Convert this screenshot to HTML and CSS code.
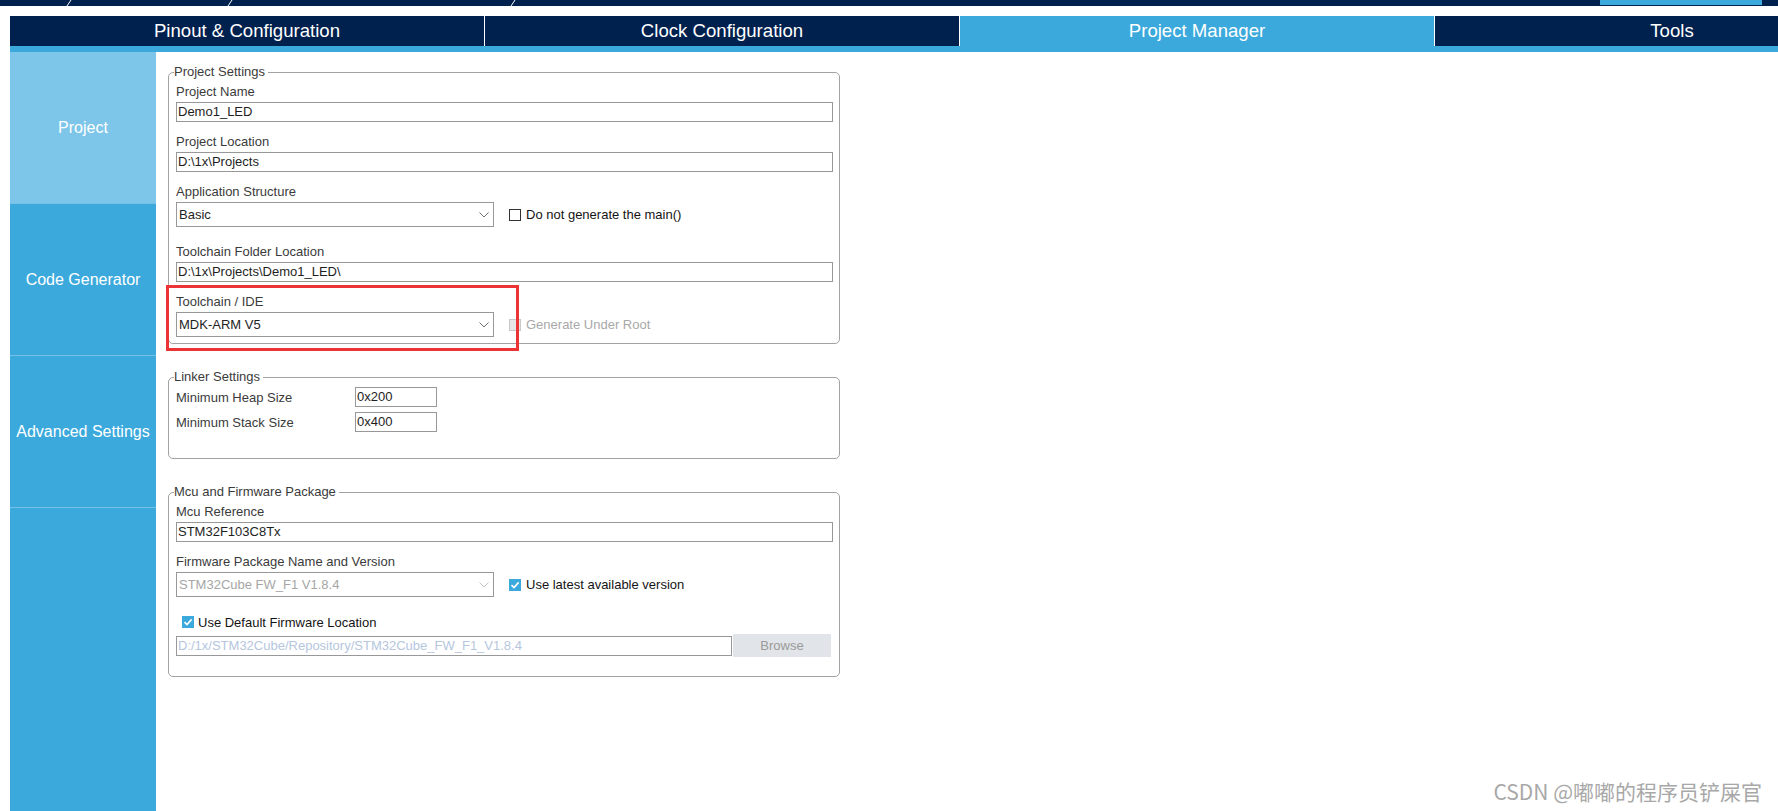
FILE: index.html
```html
<!DOCTYPE html>
<html>
<head>
    <meta charset="UTF-8">
    <title>Project Manager</title>
    <link rel="stylesheet" href="styles.css">
</head>
<body>
<div id="topStrip">
    <svg class="tick tick-1" width="6" height="6" viewBox="0 0 6 6"><path d="M1 6 L5 0" stroke="#fff" stroke-width="1"/></svg>
    <svg class="tick tick-2" width="6" height="6" viewBox="0 0 6 6"><path d="M1 6 L5 0" stroke="#fff" stroke-width="1"/></svg>
    <svg class="tick tick-3" width="6" height="6" viewBox="0 0 6 6"><path d="M1 6 L5 0" stroke="#fff" stroke-width="1"/></svg>
    <span class="top-active"></span>
</div>

<div id="tabBar">
    <div class="tab">Pinout &amp; Configuration</div>
    <div class="tab">Clock Configuration</div>
    <div class="tab active">Project Manager</div>
    <div class="tab">Tools</div>
</div>
<div id="tabLine"></div>

<div id="workArea">
    <div id="sideMenu">
        <div class="side-item selected">Project</div>
        <div class="side-item">Code Generator</div>
        <div class="side-item">Advanced Settings</div>
    </div>

    <div id="mainPanel">
        <fieldset class="group" id="projectSettings">
            <legend>Project Settings</legend>
            <label class="field-label first">Project Name</label>
            <div class="text-box">Demo1_LED</div>
            <label class="field-label">Project Location</label>
            <div class="text-box">D:\1x\Projects</div>
            <label class="field-label">Application Structure</label>
            <div class="combo-row">
                <div class="combo">
                    <span>Basic</span>
                    <svg class="chevron" width="10" height="6" viewBox="0 0 10 6"><path d="M0.5 0.5 L5 5 L9.5 0.5" fill="none" stroke="#6e6e6e" stroke-width="1"/></svg>
                </div>
                <span class="check-box"></span>
                <span class="check-text">Do not generate the main()</span>
            </div>
            <label class="field-label spaced">Toolchain Folder Location</label>
            <div class="text-box">D:\1x\Projects\Demo1_LED\</div>
            <div class="ide-group">
                <label class="field-label">Toolchain / IDE</label>
                <div class="combo-row">
                    <div class="combo">
                        <span>MDK-ARM V5</span>
                        <svg class="chevron" width="10" height="6" viewBox="0 0 10 6"><path d="M0.5 0.5 L5 5 L9.5 0.5" fill="none" stroke="#6e6e6e" stroke-width="1"/></svg>
                    </div>
                    <span class="check-box disabled"></span>
                    <span class="check-text disabled">Generate Under Root</span>
                </div>
                <span class="red-mark"></span>
            </div>
        </fieldset>

        <fieldset class="group" id="linkerSettings">
            <legend>Linker Settings</legend>
            <div class="linker-row first">
                <label class="linker-label">Minimum Heap Size</label>
                <div class="small-box">0x200</div>
            </div>
            <div class="linker-row">
                <label class="linker-label">Minimum Stack Size</label>
                <div class="small-box">0x400</div>
            </div>
        </fieldset>

        <fieldset class="group" id="mcuPackage">
            <legend>Mcu and Firmware Package</legend>
            <label class="field-label first">Mcu Reference</label>
            <div class="text-box">STM32F103C8Tx</div>
            <label class="field-label">Firmware Package Name and Version</label>
            <div class="combo-row">
                <div class="combo disabled">
                    <span>STM32Cube FW_F1 V1.8.4</span>
                    <svg class="chevron" width="10" height="6" viewBox="0 0 10 6"><path d="M0.5 0.5 L5 5 L9.5 0.5" fill="none" stroke="#c4c4c4" stroke-width="1"/></svg>
                </div>
                <span class="check-box checked"><svg width="12" height="12" viewBox="0 0 12 12"><path d="M2.5 6.2 L5 8.6 L9.6 3.4" fill="none" stroke="#fff" stroke-width="1.6"/></svg></span>
                <span class="check-text">Use latest available version</span>
            </div>
            <div class="default-row">
                <span class="check-box checked"><svg width="12" height="12" viewBox="0 0 12 12"><path d="M2.5 6.2 L5 8.6 L9.6 3.4" fill="none" stroke="#fff" stroke-width="1.6"/></svg></span>
                <span class="check-text">Use Default Firmware Location</span>
            </div>
            <div class="path-row">
                <div class="path-box">D:/1x/STM32Cube/Repository/STM32Cube_FW_F1_V1.8.4</div>
                <button class="browse-btn">Browse</button>
            </div>
        </fieldset>
    </div>
</div>

<div id="watermark">CSDN @嘟嘟的程序员铲屎官</div>
</body>
</html>
```

FILE: styles.css
```css
body {
    margin: 0;
    font-family: "Liberation Sans", Arial, sans-serif;
    font-size: 13px;
    background-color: #fff;
    width: 1778px;
    height: 811px;
    overflow: hidden;
}
#topStrip {
    display: flex;
    height: 6px;
    background-color: #00204e;
}
.tick {
    flex: none;
}
.tick-1 {
    margin-left: 66px;
}
.tick-2 {
    margin-left: 155px;
}
.tick-3 {
    margin-left: 277px;
}
.top-active {
    flex: none;
    width: 162px;
    height: 5px;
    margin-left: 1084px;
    background-color: #3ba9dc;
}
#tabBar {
    display: flex;
    margin: 10px 0 0 10px;
    height: 30px;
    overflow: hidden;
}
.tab {
    flex: 0 0 474px;
    border-right: 1px solid #fff;
    background-color: #00204e;
    color: #fff;
    font-size: 18.6px;
    line-height: 30px;
    text-align: center;
}
.tab.active {
    background-color: #3ba9dc;
}
#tabLine {
    margin-left: 10px;
    height: 6px;
    background-color: #3ba9dc;
}
#workArea {
    display: flex;
    margin-left: 10px;
    height: 759px;
}
#sideMenu {
    flex: 0 0 146px;
    background-color: #3ba9dc;
}
.side-item {
    height: 151px;
    border-bottom: 1px solid #76c2e6;
    display: flex;
    align-items: center;
    justify-content: center;
    color: #fff;
    font-size: 16px;
}
.side-item.selected {
    background-color: #7dc6e9;
}
#mainPanel {
    padding: 12px 0 0 12px;
}
.group {
    box-sizing: border-box;
    width: 672px;
    margin: 0 0 25px 0;
    padding: 0 6px 6px 7px;
    border: 1px solid #a2a2a2;
    border-radius: 5px;
    min-width: 0;
}
.group legend {
    padding: 0 3px 0 0;
    margin-left: -2px;
    line-height: 16px;
    color: #3b3b3b;
}
.field-label {
    display: block;
    margin-top: 12px;
    line-height: 16px;
    color: #3b3b3b;
}
.field-label.first {
    margin-top: 4px;
}
.field-label.spaced {
    margin-top: 17px;
}
.text-box {
    box-sizing: border-box;
    height: 20px;
    margin-top: 2px;
    padding-left: 1px;
    border: 1px solid #989898;
    line-height: 18px;
    color: #1e1e1e;
}
.combo-row {
    display: flex;
    align-items: center;
    margin-top: 2px;
}
.combo {
    box-sizing: border-box;
    width: 318px;
    height: 25px;
    padding: 0 4px 0 2px;
    border: 1px solid #989898;
    display: flex;
    align-items: center;
    justify-content: space-between;
    color: #1e1e1e;
}
.combo.disabled {
    color: #a6a6a6;
}
.chevron {
    flex: none;
}
.check-box {
    box-sizing: border-box;
    flex: none;
    width: 12px;
    height: 12px;
    margin-left: 15px;
    border: 1px solid #333;
    background-color: #fff;
}
.check-box.disabled {
    border-color: #c8c8c8;
    background-color: #e6e6e6;
}
.check-box.checked {
    border: none;
    background-color: #3ba9dc;
}
.check-box svg {
    display: block;
}
.check-text {
    margin-left: 5px;
    color: #141414;
}
.check-text.disabled {
    color: #a8a8a8;
}
.ide-group {
    position: relative;
}
.red-mark {
    position: absolute;
    left: -10px;
    top: -9px;
    width: 353px;
    height: 66px;
    box-sizing: border-box;
    border: 3px solid #ec3437;
}
.linker-row {
    display: flex;
    align-items: center;
    margin-top: 5px;
}
.linker-row.first {
    margin-top: 2px;
}
#linkerSettings {
    padding-bottom: 26px;
}
.linker-label {
    width: 179px;
    color: #3b3b3b;
}
.small-box {
    box-sizing: border-box;
    width: 82px;
    height: 20px;
    padding-left: 1px;
    border: 1px solid #989898;
    line-height: 18px;
    color: #1e1e1e;
}
.default-row {
    display: flex;
    align-items: center;
    height: 16px;
    margin-top: 17px;
}
.default-row .check-box {
    margin-left: 6px;
}
.default-row .check-text {
    margin-left: 4px;
}
.path-row {
    display: flex;
    align-items: center;
    gap: 1px;
    margin-top: 4px;
}
#mcuPackage {
    padding-bottom: 19px;
}
.path-box {
    box-sizing: border-box;
    width: 556px;
    height: 20px;
    padding-left: 1px;
    border: 1px solid #989898;
    line-height: 18px;
    color: #b5c6de;
}
.browse-btn {
    width: 98px;
    height: 23px;
    padding: 0;
    border: none;
    background-color: #e1e4e8;
    color: #9a9a9a;
    font-family: "Liberation Sans", Arial, sans-serif;
    font-size: 13px;
}
#watermark {
    position: absolute;
    right: 16px;
    bottom: 5px;
    font-family: "Noto Sans CJK SC", sans-serif;
    font-size: 21px;
    color: #a8a8a8;
}
```
